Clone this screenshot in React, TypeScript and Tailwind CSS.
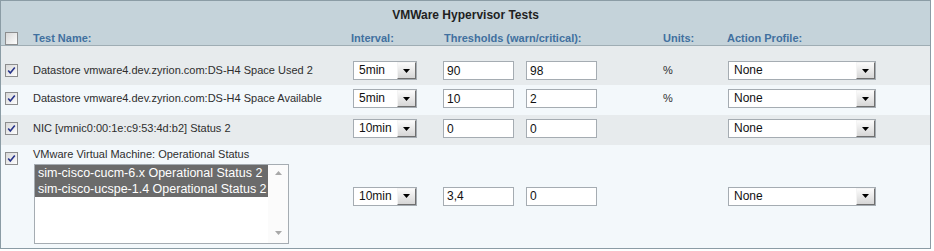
import React from 'react';

type Test = {
  name: string;
  interval: string;
  warn: string;
  crit: string;
  units: string;
  rowClass: string;
  bg: string;
};

const tests: Test[] = [
  {
    name: 'Datastore vmware4.dev.zyrion.com:DS-H4 Space Used 2',
    interval: '5min',
    warn: '90',
    crit: '98',
    units: '%',
    rowClass: 'pt-[15px] pb-[5px]',
    bg: 'bg-[#e7ebed]',
  },
  {
    name: 'Datastore vmware4.dev.zyrion.com:DS-H4 Space Available',
    interval: '5min',
    warn: '10',
    crit: '2',
    units: '%',
    rowClass: 'pt-[4px] pb-[7px]',
    bg: 'bg-[#f3f8fb]',
  },
  {
    name: 'NIC [vmnic0:00:1e:c9:53:4d:b2] Status 2',
    interval: '10min',
    warn: '0',
    crit: '0',
    units: '',
    rowClass: 'pt-[4px] pb-[7px]',
    bg: 'bg-[#e7ebed]',
  },
];

const Checkbox: React.FC<{ checked?: boolean }> = ({ checked }) => (
  <svg width="13" height="13" viewBox="0 0 13 13" className="block shrink-0">
    <defs>
      <linearGradient id="cbg" x1="0" y1="0" x2="1" y2="1">
        <stop offset="0" stopColor="#d6d6d6" />
        <stop offset="1" stopColor="#ffffff" />
      </linearGradient>
    </defs>
    <rect x="0.5" y="0.5" width="12" height="12" fill="url(#cbg)" stroke="#8c8d8e" />
    {checked && (
      <path d="M3.2 6.4 L5.3 8.9 L9.8 3.4" fill="none" stroke="#26338a" strokeWidth="1.6" />
    )}
  </svg>
);

const DownTri: React.FC<{ color?: string; up?: boolean }> = ({ color = '#000', up }) => (
  <svg width="7" height="4" viewBox="0 0 7 4" className="block">
    <polygon points={up ? '0,4 7,4 3.5,0' : '0,0 7,0 3.5,4'} fill={color} />
  </svg>
);

const Select: React.FC<{ value: string; className: string }> = ({ value, className }) => (
  <div className={`flex h-[19px] border border-[#a5acb2] bg-white ${className}`}>
    <span className="flex-1 pl-[5px] text-[12px] leading-[17px] text-[#111]">{value}</span>
    <div className="flex w-[19px] items-center justify-center border border-t-[#f4f4f4] border-l-[#f4f4f4] border-r-[#6f6f6f] border-b-[#6f6f6f] bg-gradient-to-b from-[#fbfbfb] to-[#d6d6d6]">
      <DownTri />
    </div>
  </div>
);

const Field: React.FC<{ value: string }> = ({ value }) => (
  <input
    readOnly
    value={value}
    className="h-[19px] w-[71px] border border-[#a5acb2] bg-white px-[3px] text-[12px] text-[#111] outline-none"
  />
);

export default function App() {
  return (
    <div className="bg-white font-['Liberation_Sans',Arial,sans-serif] pb-[2px]">
      <div className="w-[931px] border border-[#8b9ca5]">
        {/* header */}
        <div className="border-b border-[#9fadb4] bg-[#c5d3da] pt-[7px]">
          <div className="h-[14px] text-center text-[12px] font-bold leading-[14px] text-[#1f1f1f]">
            VMWare Hypervisor Tests
          </div>
          <div className="mt-[10px] flex h-[13px] items-center text-[11px] font-bold leading-[13px] text-[#41709f]">
            <div className="w-[32px] pl-[4px]">
              <Checkbox />
            </div>
            <div className="w-[318px]">Test Name:</div>
            <div className="w-[92px]">Interval:</div>
            <div className="w-[220px] pl-[1px]">Thresholds (warn/critical):</div>
            <div className="w-[64px]">Units:</div>
            <div className="flex-1">Action Profile:</div>
          </div>
        </div>

        {tests.map((t) => (
          <div key={t.name} className={`flex items-center ${t.bg} ${t.rowClass}`}>
            <div className="w-[32px] pl-[4px]">
              <Checkbox checked />
            </div>
            <div className="w-[318px] text-[11px] text-[#2e2e2e]">{t.name}</div>
            <div className="w-[92px] pl-[2px]">
              <Select value={t.interval} className="w-[64px]" />
            </div>
            <div className="flex w-[220px] gap-[12px]">
              <Field value={t.warn} />
              <Field value={t.crit} />
            </div>
            <div className="w-[64px] text-[11px] text-[#2e2e2e]">{t.units}</div>
            <div className="flex-1 pl-[1px]">
              <Select value="None" className="w-[148px]" />
            </div>
          </div>
        ))}

        {/* virtual machine row with instance list */}
        <div className="flex items-center bg-[#f3f8fb] pt-[3px] pb-[4px]">
          <div className="w-[32px] self-start pt-[4px] pl-[4px]">
            <Checkbox checked />
          </div>
          <div className="w-[318px] self-start">
            <div className="text-[11px] leading-[13px] text-[#2e2e2e]">
              VMware Virtual Machine: Operational Status
            </div>
            <div className="mt-[3px] ml-[1px] flex h-[80px] w-[255px] border border-[#a5acb2] bg-white">
              <div className="w-[233px] text-[12.5px] leading-[16px] text-white whitespace-nowrap">
                <div className="bg-[#6b6b6b] pl-[3px]">sim-cisco-cucm-6.x Operational Status 2</div>
                <div className="bg-[#6b6b6b] pl-[3px]">sim-cisco-ucspe-1.4 Operational Status 2</div>
              </div>
              <div className="flex flex-1 flex-col items-center justify-between bg-[#fbfbfb] pt-[6px] pb-[8px]">
                <DownTri up color="#a8a8a8" />
                <DownTri color="#a8a8a8" />
              </div>
            </div>
          </div>
          <div className="w-[92px] pl-[2px]">
            <Select value="10min" className="w-[64px]" />
          </div>
          <div className="flex w-[220px] gap-[12px]">
            <Field value="3,4" />
            <Field value="0" />
          </div>
          <div className="w-[64px]" />
          <div className="flex-1 pl-[1px]">
            <Select value="None" className="w-[148px]" />
          </div>
        </div>
      </div>
    </div>
  );
}
